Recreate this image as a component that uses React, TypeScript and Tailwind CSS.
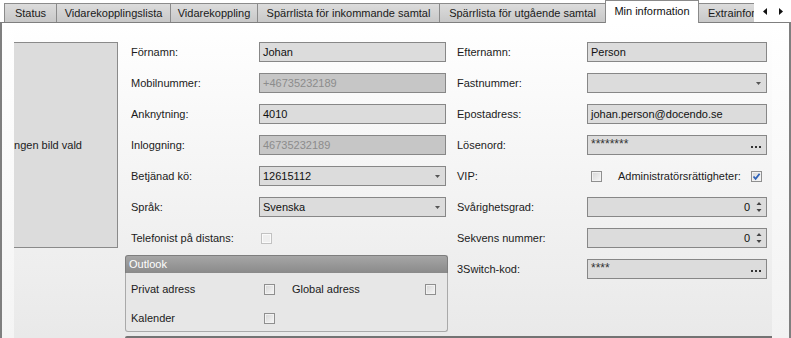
import type { ReactNode } from 'react'

const tabs = [
  { label: 'Status', w: 'w-[53px]' },
  { label: 'Vidarekopplingslista', w: 'w-[115px]' },
  { label: 'Vidarekoppling', w: 'w-[88px]' },
  { label: 'Spärrlista för inkommande samtal', w: 'w-[183px]' },
  { label: 'Spärrlista för utgående samtal', w: 'w-[167px]' },
  { label: 'Min information', w: 'w-[94px]', active: true },
  { label: 'Extrainformation', w: 'w-[100px]' },
]

function Check({ checked = false, disabled = false }: { checked?: boolean; disabled?: boolean }) {
  return (
    <div
      className={`w-[11px] h-[11px] border shrink-0 flex items-center justify-center ${
        disabled
          ? 'border-[#c2c2c2] bg-[#efefef] shadow-[inset_0_0_0_1px_#fafafa]'
          : 'border-[#8f8f8f] bg-gradient-to-br from-[#d6d6d6] to-[#f7f7f7] shadow-[inset_0_0_0_1px_#f2f2f2]'
      }`}
    >
      {checked && (
        <svg width="9" height="9" viewBox="0 0 9 9">
          <path d="M1.5 4.5 L3.6 6.8 L7.6 1.8" fill="none" stroke="#2f62b8" strokeWidth="1.8" />
        </svg>
      )}
    </div>
  )
}

function DropArrow() {
  return (
    <svg width="5" height="3" viewBox="0 0 5 3" className="shrink-0">
      <polygon points="0,0 5,0 2.5,3" fill="#555" />
    </svg>
  )
}

function Dots() {
  return (
    <div className="flex gap-[2px] items-end pt-[3px] pr-[1px] shrink-0">
      <span className="w-[2px] h-[2px] bg-[#333]" />
      <span className="w-[2px] h-[2px] bg-[#333]" />
      <span className="w-[2px] h-[2px] bg-[#333]" />
    </div>
  )
}

function Spin() {
  return (
    <svg width="6" height="14" viewBox="0 0 6 14" className="shrink-0">
      <polygon points="0.5,5 3,2 5.5,5" fill="#444" />
      <polygon points="0.5,9 3,12 5.5,9" fill="#444" />
    </svg>
  )
}

type Kind = 'text' | 'combo' | 'dots' | 'spin'

function Field({ value = '', disabled = false, kind = 'text', w }: { value?: string; disabled?: boolean; kind?: Kind; w: string }) {
  return (
    <div
      className={`${w} h-[20px] border border-[#878787] flex items-center pl-[3px] pr-[4px] ${
        disabled ? 'bg-[#c6c6c6] text-[#8c8c8c]' : 'bg-[#dcdcdc] text-[#111]'
      }`}
    >
      {kind === 'spin' ? (
        <>
          <span className="flex-1 text-right pr-[6px]">{value}</span>
          <Spin />
        </>
      ) : (
        <>
          <span className={`flex-1 whitespace-nowrap ${kind === 'dots' ? 'self-start pt-[2px] text-[12px] text-[#333]' : ''}`}>{value}</span>
          {kind === 'combo' && <div className="pr-[1px]"><DropArrow /></div>}
          {kind === 'dots' && <Dots />}
        </>
      )}
    </div>
  )
}

function Row({ label, lw, children }: { label: string; lw: string; children: ReactNode }) {
  return (
    <div className="h-[20px] flex items-center">
      <span className={`${lw} shrink-0 text-[#1b1b1b] whitespace-nowrap`}>{label}</span>
      {children}
    </div>
  )
}

export default function App() {
  return (
    <div className="w-[791px] h-[338px] overflow-hidden bg-white flex flex-col font-['Liberation_Sans',Arial,sans-serif] text-[11px] leading-none">
      {/* Tabs */}
      <div className="relative h-[22px] shrink-0 flex items-end pl-[4px] overflow-visible">
        {tabs.map((t, i) =>
          t.active ? (
            <div
              key={t.label}
              className={`${t.w} h-[23px] -mb-[1px] ${i > 0 ? '-ml-px' : ''} relative z-10 bg-white border border-b-0 border-[#8a8a8a] flex items-center justify-center pb-[1px] text-[#111] whitespace-nowrap shrink-0`}
            >
              {t.label}
            </div>
          ) : (
            <div
              key={t.label}
              className={`${t.w} h-[19px] ${i > 0 ? '-ml-px' : ''} bg-gradient-to-b from-[#dcdcdc] to-[#c8c8c8] border border-b-0 border-[#8b8b8b] flex items-center justify-center text-[#1a1a1a] whitespace-nowrap shrink-0 overflow-hidden`}
            >
              {t.label}
            </div>
          )
        )}
        <div className="absolute top-0 right-0 w-[37px] h-[22px] bg-white z-20 flex items-center gap-[12px] pl-[9px]">
          <svg width="4" height="7" viewBox="0 0 4 7">
            <polygon points="4,0 4,7 0,3.5" fill="#111" />
          </svg>
          <svg width="4" height="7" viewBox="0 0 4 7">
            <polygon points="0,0 0,7 4,3.5" fill="#111" />
          </svg>
        </div>
      </div>

      {/* Panel */}
      <div className="flex-1 flex border-t border-l-2 border-r-2 border-[#7f7f7f] bg-gradient-to-b from-white to-[#e9e9e9]">
        <div className="w-[12px] shrink-0 bg-gradient-to-b from-white to-[#f4f4f4]" />

        {/* Picture */}
        <div className="w-[104px] h-[206px] mt-[19px] shrink-0 bg-[#dcdcdc] border-t border-r border-b border-[#8a8a8a] flex items-center overflow-hidden">
          <span className="-ml-[3px] whitespace-nowrap text-[#1b1b1b]">Ingen bild vald</span>
        </div>

        {/* Form */}
        <div className="w-[647px] ml-[7px] shrink-0 flex flex-col pt-[19px]">
          <div className="flex">
            <div className="w-[323px] flex flex-col">
              <div className="flex flex-col gap-[11px] pl-[6px]">
                <Row label="Förnamn:" lw="w-[128px]"><Field w="w-[187px]" value="Johan" /></Row>
                <Row label="Mobilnummer:" lw="w-[128px]"><Field w="w-[187px]" value="+46735232189" disabled /></Row>
                <Row label="Anknytning:" lw="w-[128px]"><Field w="w-[187px]" value="4010" /></Row>
                <Row label="Inloggning:" lw="w-[128px]"><Field w="w-[187px]" value="46735232189" disabled /></Row>
                <Row label="Betjänad kö:" lw="w-[128px]"><Field w="w-[187px]" value="12615112" kind="combo" /></Row>
                <Row label="Språk:" lw="w-[128px]"><Field w="w-[187px]" value="Svenska" kind="combo" /></Row>
                <Row label="Telefonist på distans:" lw="w-[130px]"><Check disabled /></Row>
              </div>

              {/* Outlook group */}
              <div className="mt-[7px] h-[77px] flex flex-col">
                <div className="h-[18px] shrink-0 rounded-t-[3px] border border-b-0 border-[#7e7e7e] bg-gradient-to-b from-[#a6a6a6] to-[#8a8a8a] text-white flex items-center pl-[3px]">
                  Outlook
                </div>
                <div className="flex-1 border border-t-0 border-[#a9a9a9] rounded-b-[3px] bg-[#e7e7e7] flex flex-col gap-[9px] pt-[6px] pl-[5px]">
                  <div className="h-[20px] flex items-center">
                    <span className="w-[133px] text-[#1b1b1b]">Privat adress</span>
                    <Check />
                    <span className="w-[133px] ml-[17px] text-[#1b1b1b]">Global adress</span>
                    <Check />
                  </div>
                  <div className="h-[20px] flex items-center">
                    <span className="w-[133px] text-[#1b1b1b]">Kalender</span>
                    <Check />
                  </div>
                </div>
              </div>
            </div>

            <div className="w-[310px] ml-[9px] flex flex-col gap-[11px]">
              <Row label="Efternamn:" lw="w-[130px]"><Field w="w-[180px]" value="Person" /></Row>
              <Row label="Fastnummer:" lw="w-[130px]"><Field w="w-[180px]" kind="combo" /></Row>
              <Row label="Epostadress:" lw="w-[130px]"><Field w="w-[180px]" value="johan.person@docendo.se" /></Row>
              <Row label="Lösenord:" lw="w-[130px]"><Field w="w-[180px]" value="********" kind="dots" /></Row>
              <Row label="VIP:" lw="w-[134px]">
                <Check />
                <span className="ml-[16px] w-[133px] text-[#1b1b1b] whitespace-nowrap">Administratörsrättigheter:</span>
                <Check checked />
              </Row>
              <Row label="Svårighetsgrad:" lw="w-[130px]"><Field w="w-[180px]" value="0" kind="spin" /></Row>
              <Row label="Sekvens nummer:" lw="w-[130px]"><Field w="w-[180px]" value="0" kind="spin" /></Row>
              <Row label="3Switch-kod:" lw="w-[130px]"><Field w="w-[180px]" value="****" kind="dots" /></Row>
            </div>
          </div>

          <div className="mt-[4px] h-[2px] bg-[#737373] rounded-tl-[2px]" />
        </div>

        <div className="flex-1 bg-gradient-to-b from-white to-[#f2f2f2]" />
      </div>
    </div>
  )
}
